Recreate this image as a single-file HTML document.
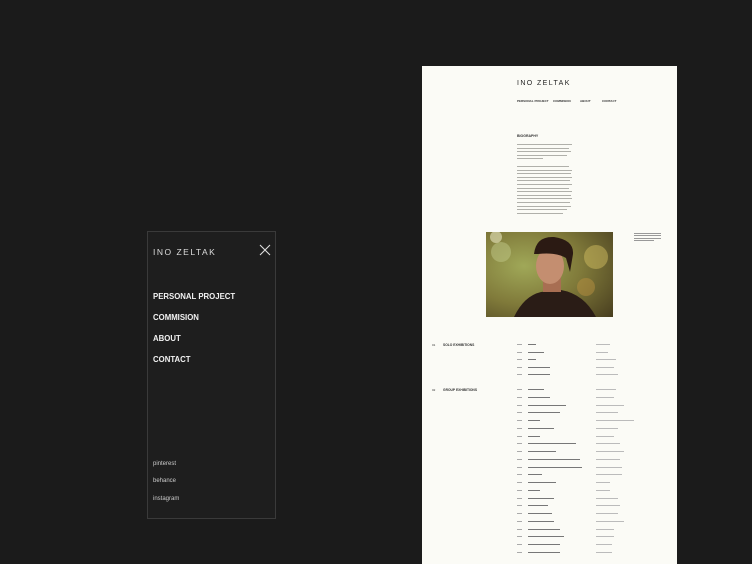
<!DOCTYPE html>
<html><head><meta charset="utf-8"><style>
*{margin:0;padding:0;box-sizing:border-box}
body{width:752px;height:564px;background:#1b1b1b;position:relative;overflow:hidden;font-family:"Liberation Sans",sans-serif}
.menu{position:absolute;left:147px;top:231px;width:129px;height:288px;background:#1e1e1e;border:1px solid #3a3a3a}
.menu .logo{position:absolute;left:5px;top:15px;color:#ddd;font-size:8.5px;letter-spacing:1.5px}
.menu .x{position:absolute;left:111px;top:12px;width:12px;height:12px}
.menu .nav{position:absolute;left:5px;color:#f2f2f2;font-size:7.8px;font-weight:bold}
.menu .soc{position:absolute;left:5px;color:#ccc;font-size:6px}
.page{position:absolute;left:422px;top:66px;width:255px;height:498px;background:#fbfbf6}
.t{position:absolute;font-size:3px;color:#333;white-space:nowrap}
.line{position:absolute;height:1.2px;background:#888}
</style></head><body>
<div class="menu">
<div class="logo">INO ZELTAK</div>
<svg class="x" viewBox="0 0 12 12"><path d="M1 1L11 11M11 1L1 11" stroke="#ddd" stroke-width="1.1"/></svg>
<div class="nav" style="top:60px">PERSONAL PROJECT</div>
<div class="nav" style="top:81px">COMMISION</div>
<div class="nav" style="top:102px">ABOUT</div>
<div class="nav" style="top:123px">CONTACT</div>
<div class="soc" style="top:229px">pinterest</div>
<div class="soc" style="top:246px">behance</div>
<div class="soc" style="top:264px">instagram</div>
</div>
<div class="page">
<div class="t" style="left:95px;top:14px;font-size:7px;letter-spacing:1.4px;color:#222">INO ZELTAK</div>
<div class="t" style="left:95px;top:33px;font-weight:bold">PERSONAL PROJECT</div>
<div class="t" style="left:131px;top:33px;font-weight:bold">COMMISION</div>
<div class="t" style="left:158px;top:33px;font-weight:bold">ABOUT</div>
<div class="t" style="left:180px;top:33px;font-weight:bold">CONTACT</div>
<div class="t" style="left:95px;top:68px;font-size:3.5px;font-weight:bold">BIOGRAPHY</div>
<div id="bio" style="position:absolute;left:95px;top:78px;width:55px"></div>
<svg style="position:absolute;left:64px;top:166px" width="127" height="85" viewBox="0 0 127 85">
<defs><radialGradient id="bg" cx="0.3" cy="0.4" r="0.9"><stop offset="0" stop-color="#a0a858"/><stop offset="0.5" stop-color="#807a3a"/><stop offset="1" stop-color="#4a4020"/></radialGradient></defs>
<rect width="127" height="85" fill="url(#bg)"/>
<circle cx="15" cy="20" r="10" fill="#c0c888" opacity=".5"/><circle cx="110" cy="25" r="12" fill="#d0bc60" opacity=".5"/><circle cx="100" cy="55" r="9" fill="#b89040" opacity=".5"/><circle cx="10" cy="5" r="6" fill="#e8e6c0" opacity=".6"/>
<path d="M28 85 Q38 64 55 60 L75 58 Q98 62 110 85Z" fill="#2a1c16"/>
<rect x="57" y="40" width="18" height="20" fill="#a86e52"/>
<ellipse cx="64" cy="34" rx="14" ry="18" fill="#c48e70"/>
<path d="M48 22 Q50 4 68 5 Q88 8 87 22 L84 40 L80 26 Q70 20 52 22Z" fill="#2b1a13"/>
</svg>
<div style="position:absolute;left:212px;top:167px;width:27px">
<div style="height:.8px;background:#999;margin-bottom:1.6px"></div><div style="height:.8px;background:#999;margin-bottom:1.6px"></div><div style="height:.8px;background:#999;margin-bottom:1.6px"></div><div style="height:.8px;width:20px;background:#999"></div></div>
<div id="ex"></div>
</div>
<script>
var b='',bw=[55,52,54,50,26,0,52,55,54,55,53,55,52,55,54,55,53,54,50,46];
bw.forEach(function(w){b+=w?'<div style="height:1px;margin-bottom:2.6px;width:'+w+'px;background:#b0b0aa"></div>':'<div style="height:4px"></div>';});
document.getElementById('bio').innerHTML=b;
var ex=document.getElementById('ex'),h='';
function row(y,w1,w2){h+='<div class="line" style="left:95px;top:'+y+'px;width:5px;background:#aaa;height:1px"></div><div class="line" style="left:106px;top:'+y+'px;width:'+w1+'px;background:#777"></div><div class="line" style="left:174px;top:'+y+'px;width:'+w2+'px;background:#bbb;height:1px"></div>';}
h+='<div class="t" style="left:10px;top:277px">01</div><div class="t" style="left:21px;top:277px;font-size:3.3px;font-weight:bold">SOLO EXHIBITIONS</div>';
h+='<div class="t" style="left:10px;top:322px">02</div><div class="t" style="left:21px;top:322px;font-size:3.3px;font-weight:bold">GROUP EXHIBITIONS</div>';
var s=[[8,14],[16,12],[8,20],[22,18],[22,22]];
s.forEach(function(a,i){row(278+i*7.5,a[0],a[1]);});
var g=[[16,20],[22,18],[38,28],[32,22],[12,38],[26,22],[12,18],[48,24],[28,28],[52,24],[54,26],[14,26],[28,14],[12,14],[26,22],[20,24],[24,22],[26,28],[32,18],[36,18],[32,16],[32,16]];
g.forEach(function(a,i){row(323+i*7.75,a[0],a[1]);});
ex.innerHTML=h;
</script>
</body></html>
